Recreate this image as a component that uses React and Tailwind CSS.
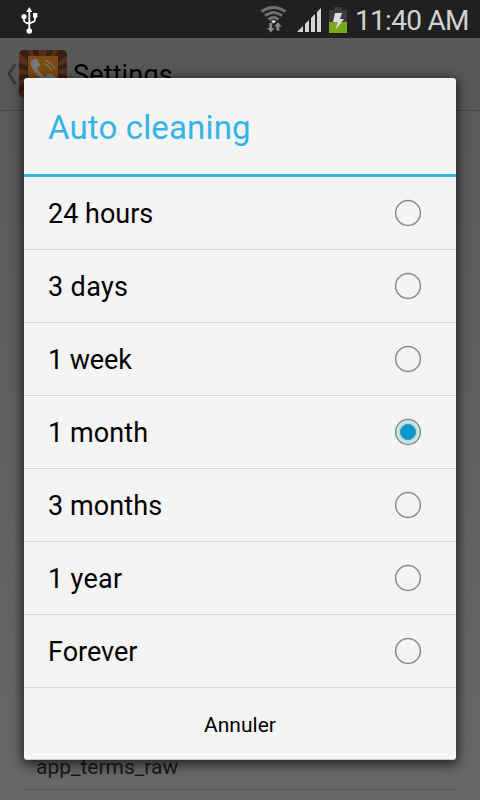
const options = [
  { label: "24 hours", tracking: "tracking-[0px]" },
  { label: "3 days", tracking: "tracking-[0.35px]" },
  { label: "1 week", tracking: "tracking-[-0.1px]" },
  { label: "1 month", tracking: "tracking-[0.1px]" },
  { label: "3 months", tracking: "tracking-[0.1px]" },
  { label: "1 year", tracking: "tracking-[0.3px]" },
  { label: "Forever", tracking: "tracking-[0px]" },
];

const selected = "1 month";

function UsbIcon() {
  return (
    <svg className="ml-5 mt-1.5 h-7 w-5" viewBox="0 0 20 28" fill="none">
      <path d="M9.3 4v21M4 11v3.2q0 1.8 2 2.4l3.3 1.2M15 9.5v4q0 1.8-2 2.4l-3.7 1.6" stroke="#fff" strokeWidth="1.8" />
      <path d="M9.3 1l3 5h-6z" fill="#fff" />
      <circle cx="4" cy="10.5" r="2.6" fill="#fff" />
      <path d="M13 7h4.400v4.600H13z" fill="#fff" />
      <circle cx="9.3" cy="25" r="2.8" fill="#fff" />
    </svg>
  );
}

function WifiIcon() {
  return (
    <svg className="mt-1 h-[30px] w-7" viewBox="0 0 28 30" fill="none">
      <g stroke="#707070" strokeWidth="2.9">
        <path d="M1.5 7.6q12-8.400 24 0" />
        <path d="M5 11.600q8.500-6.400 17 0" />
        <path d="M8.500 15.500q5-4 10 0" />
      </g>
      <path d="M11 17q2.500-1.600 5 0l-2.500 2.500z" fill="#eee" />
      <path d="M9.300 19h2.900v5h2.300l-3.700 4.500L7 24h2.300zM16.400 26.500v-4h-2.200l3.700-4.500 3.700 4.500h-2.300v4z" fill="#8a8a8a" />
    </svg>
  );
}

function SignalIcon() {
  return (
    <svg className="mt-2 ml-2 h-6 w-[25px]" viewBox="0 0 25 24" fill="#d5d5d5">
      <path d="M1 24l6-6v6zM9 16l4-4v12H9zM15 10l4-4v18h-4zM21 4l4-4v24h-4z" />
    </svg>
  );
}

function BatteryIcon() {
  return (
    <svg className="ml-2 mt-[7px] h-[26px] w-[18px]" viewBox="0 0 18 26">
      <path d="M5 0h8v3h5v23H0V3h5z" fill="#3b3b3b" />
      <path d="M0 15h18v11H0z" fill="#77a81b" />
      <path d="M6 6h7l-2 6h4L6.3 23l2.5-8H4z" fill="#dedede" />
    </svg>
  );
}

function AppIcon() {
  return (
    <svg className="ml-px h-12 w-12" viewBox="0 0 48 48">
      <defs>
        <clipPath id="appIcon">
          <rect width="48" height="48" rx="5" />
        </clipPath>
      </defs>
      <g clipPath="url(#appIcon)">
        <path d="M0 0h48v48H0z" fill="#56301c" />
        <path
          d="M24 24L-2 1l7-6zM24 24L12-2h7zM24 24L28-2h7zM24 24L43-5l8 8zM24 24L52 10v7zM24 24L52 25v7zM24 24L-5 10v7zM24 24L-5 25v7zM24 24L-5 39v9zM24 24L52 39v9z"
          fill="#3b1e12"
        />
      </g>
      <path d="M8 6h32v36H8z" fill="#301b10" opacity=".65" />
      <path d="M9 6h30v35H9z" fill="#7d4b12" />
      <path
        d="M11.500 12q1.500-3 6-3.500l4 6.500-3.500 3.500q4 6 8.500 8.500l4-3.500 6.500 3.500c0 3-4 5-8 4-9-2-17-11-17.500-19z"
        fill="#777"
      />
      <path d="M25 13.500q5 2 7.500 7M26 10q7 3 10 9" stroke="#777" strokeWidth="1.3" fill="none" />
    </svg>
  );
}

function Radio({ checked }) {
  return (
    <svg className="h-7 w-7" viewBox="0 0 28 28">
      <defs>
        <radialGradient id="radioGlow">
          <stop offset="55%" stopColor="#9bd3e9" />
          <stop offset="100%" stopColor="#e5f1f5" />
        </radialGradient>
      </defs>
      <circle cx="14" cy="14" r="12.4" fill={checked ? "url(#radioGlow)" : "none"} stroke="#8c8c8c" strokeWidth="1.5" />
      {checked && <circle cx="14" cy="14" r="7.5" fill="#0799cf" stroke="#3c87a3" strokeWidth="1" />}
    </svg>
  );
}

function StatusBar() {
  return (
    <div className="flex h-[38px] bg-[#202020]">
      <UsbIcon />
      <div className="ml-auto flex pr-3">
        <WifiIcon />
        <SignalIcon />
        <BatteryIcon />
        <span className="ml-2 w-[113px] text-[28px] leading-[41px] tracking-[-0.7px] whitespace-nowrap text-[#d2d2d2]">
          11:40 AM
        </span>
      </div>
    </div>
  );
}

export default function App() {
  return (
    <div className="relative flex h-[800px] w-[480px] flex-col overflow-hidden bg-linear-to-b from-[#575757] to-[#686868] font-['Roboto',sans-serif]">
      <StatusBar />
      <header className="flex h-[73px] items-center border-b border-[#444] bg-[#585858] pl-1.5">
        <svg className="h-6 w-3" viewBox="0 0 12 24" fill="none">
          <path d="M9.5 2L3 12l6.5 10" stroke="#393939" strokeWidth="3" />
        </svg>
        <AppIcon />
        <h1 className="ml-1.5 pt-0.5 text-[27px] leading-8 tracking-[0.15px] text-black">Settings</h1>
      </header>
      <div className="mx-6 mt-auto mb-[10px] border-b border-[#565656] pl-3 text-[21px] leading-[24px] text-[#171717]">
        <p className="pb-[10px]">app_terms_raw</p>
      </div>

      <div className="absolute top-[78px] left-6 flex h-[682px] w-[432px] flex-col rounded-[3px] border-b border-[#cbd0cb] bg-[#f4f4f4] shadow-[0_3px_12px_2px_rgba(0,0,0,0.65)]">
        <h2 className="h-[99px] border-b-3 border-[#33b5e5] pl-6 text-[33px] leading-[100px] tracking-[0.15px] text-[#33b5e5]">
          Auto cleaning
        </h2>
        <ul>
          {options.map(({ label, tracking }) => (
            <li
              key={label}
              className="flex h-[73px] items-center justify-between border-b border-[#d4d4d4] pr-[34px] pl-6"
            >
              <span className={`pt-0.5 text-[27px] leading-8 text-black ${tracking}`}>{label}</span>
              <Radio checked={label === selected} />
            </li>
          ))}
        </ul>
        <button className="flex-1 pt-1 text-[21px] text-black">Annuler</button>
      </div>
    </div>
  );
}
